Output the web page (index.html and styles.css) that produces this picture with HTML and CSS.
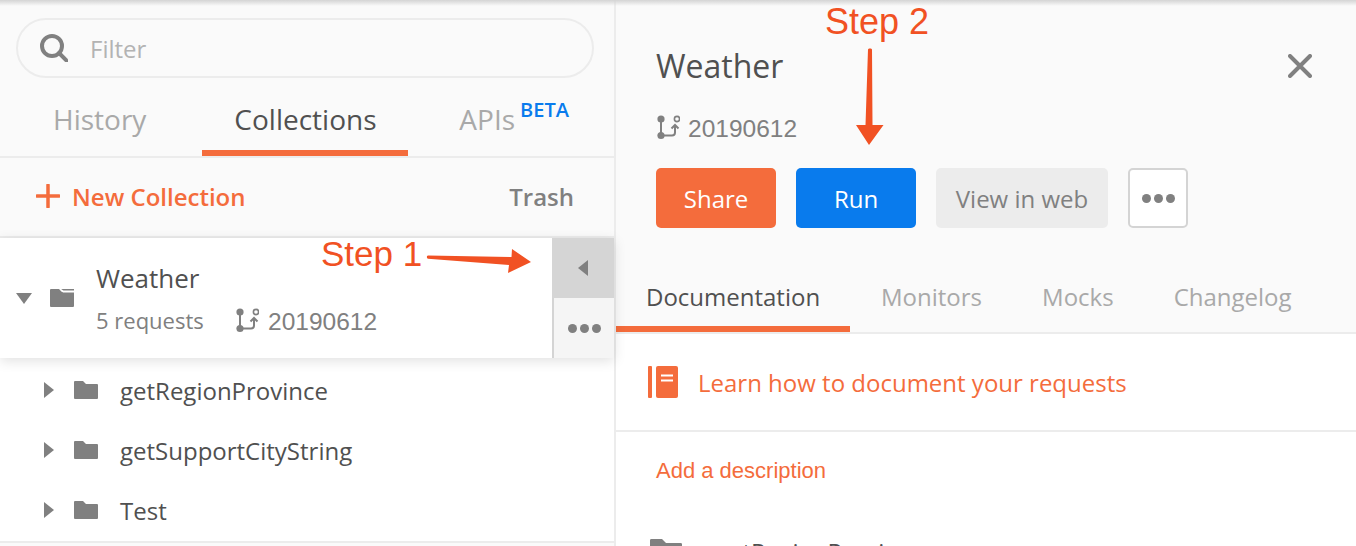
FILE: index.html
```html
<!DOCTYPE html>
<html lang="en">
<head>
  <meta charset="UTF-8">
  <title>Weather collection</title>
  <link rel="stylesheet" href="styles.css">
</head>
<body>
  <svg class="defs" width="0" height="0">
    <symbol id="folder" viewBox="0 0 24 18"><path d="M1 0h8l3 3h11a1 1 0 0 1 1 1v13a1 1 0 0 1-1 1H1a1 1 0 0 1-1-1V1a1 1 0 0 1 1-1z"/></symbol>
    <symbol id="branch" viewBox="0 0 24 25">
      <circle cx="5" cy="4" r="3.6" fill="#808080"/>
      <circle cx="5" cy="20.5" r="3.6" fill="#808080"/>
      <circle cx="21" cy="4" r="2.6" fill="none" stroke="#808080" stroke-width="1.6"/>
      <path d="M5 5v15M5 20.5h11a3 3 0 0 0 3-3V10.500M15.500 13.500l3.500-3.500 3.500 3.500" fill="none" stroke="#808080" stroke-width="2"/>
    </symbol>
  </svg>

  <div class="app">
    <aside class="side">
      <div class="search">
        <div class="search-box">
          <svg class="search-icon" width="28" height="28" viewBox="0 0 28 28"><circle cx="12" cy="12" r="10" fill="none" stroke="#808080" stroke-width="4"/><path d="M19 19l8 8" stroke="#808080" stroke-width="4" stroke-linecap="round"/></svg>
          <span class="filter">Filter</span>
        </div>
      </div>
      <nav class="side-tabs">
        <a class="side-tab tab-history">History</a>
        <a class="side-tab tab-collections">Collections</a>
        <a class="side-tab tab-apis">APIs<sup>BETA</sup></a>
      </nav>
      <div class="toolbar">
        <a class="new-collection">
          <svg width="24" height="24" viewBox="0 0 24 24"><path d="M12 1v22M1 12h22" stroke="#f46c3c" stroke-width="3.500" stroke-linecap="round"/></svg>
          New Collection
        </a>
        <a class="trash">Trash</a>
      </div>
      <div class="collection">
        <span class="caret-down"></span>
        <svg class="open-folder" width="24" height="18" viewBox="0 0 24 18"><path d="M1 0h8l3 3h12v14a1 1 0 0 1-1 1H1a1 1 0 0 1-1-1V1a1 1 0 0 1 1-1z" fill="#808080"/><path d="M11 0h13v1.500H12.500z" fill="#808080"/><path d="M10 0.500l3 3h11V2H13.500L12 .5z" fill="#fff"/></svg>
        <div class="collection-info">
          <div class="collection-name">Weather</div>
          <div class="collection-meta">
            <span class="requests">5 requests</span>
            <svg class="branch" width="24" height="25"><use href="#branch"/></svg>
            <span class="version">20190612</span>
          </div>
        </div>
        <div class="collection-actions">
          <div class="action-collapse"><span class="caret-left"></span></div>
          <div class="action-more"><span class="dots"><i></i><i></i><i></i></span></div>
        </div>
      </div>
      <ul class="folders">
        <li><span class="caret-right"></span><svg class="folder" width="24" height="18"><use href="#folder"/></svg>getRegionProvince</li>
        <li><span class="caret-right"></span><svg class="folder" width="24" height="18"><use href="#folder"/></svg>getSupportCityString</li>
        <li><span class="caret-right"></span><svg class="folder" width="24" height="18"><use href="#folder"/></svg>Test</li>
      </ul>
    </aside>

    <main class="detail">
      <div class="detail-head">
        <div class="detail-title">
          <h1>Weather</h1>
          <svg width="24" height="24" viewBox="0 0 24 24"><path d="M2 2l20 20M22 2L2 22" stroke="#808080" stroke-width="4" stroke-linecap="round"/></svg>
        </div>
        <div class="detail-version">
          <svg class="branch" width="24" height="25"><use href="#branch"/></svg>
          <span class="version">20190612</span>
        </div>
        <div class="buttons">
          <a class="btn btn-share">Share</a>
          <a class="btn btn-run">Run</a>
          <a class="btn btn-web">View in web</a>
          <a class="btn btn-more"><span class="dots"><i></i><i></i><i></i></span></a>
        </div>
        <nav class="detail-tabs">
          <a class="detail-tab active">Documentation</a>
          <a class="detail-tab">Monitors</a>
          <a class="detail-tab">Mocks</a>
          <a class="detail-tab">Changelog</a>
        </nav>
      </div>
      <div class="learn">
        <svg width="30" height="32" viewBox="0 0 30 32"><rect width="4" height="32" rx="1" fill="#f46c3c"/><rect x="8" width="22" height="32" rx="2" fill="#f46c3c"/><path d="M13 9.500h12M13 14.500h12" stroke="#fff" stroke-width="2"/></svg>
        <a>Learn how to document your requests</a>
      </div>
      <div class="describe"><a>Add a description</a></div>
      <div class="doc-folder">
        <svg width="32" height="24"><use href="#folder"/></svg>
        <span>getRegionProvince</span>
      </div>
    </main>
  </div>

  <div class="top-shade"></div>

  <div class="step step-1">Step 1</div>
  <svg class="arrow arrow-1" width="106" height="26" viewBox="0 0 106 26"><path d="M2 6.500c-1.500 0-1.500 3 0 3.300L83 16l-1 8 23-11L86 0l-.5 8z" fill="#f15123"/></svg>
  <div class="step step-2">Step 2</div>
  <svg class="arrow arrow-2" width="28" height="100" viewBox="0 0 28 100"><path d="M12 1.500c0-1.500 4-1.500 4 0L16.500 77h11L13 97 0 77h9.500z" fill="#f15123"/></svg>
</body>
</html>
```

FILE: styles.css
```css
* { box-sizing: border-box; }
body { margin: 0; width: 1356px; height: 546px; overflow: hidden; position: relative; font-family: "Open Sans", sans-serif; color: #505050; background: #fff; }
h1, ul { margin: 0; padding: 0; }
li { list-style: none; }
.defs { position: absolute; }
.folder, .doc-folder svg { fill: #808080; }

.app { display: flex; height: 546px; }
.top-shade { position: absolute; left: 0; top: 0; width: 100%; height: 6px; background: linear-gradient(#d4d4d4, rgba(250, 250, 250, 0)); }

/* left pane */
.side { width: 616px; flex: none; background: #fafafa; border-right: 2px solid #ececec; }
.search { height: 78px; padding: 18px 20px 0 16px; }
.search-box { height: 60px; border: 2px solid #ececec; border-radius: 30px; display: flex; align-items: center; padding-left: 22px; font-size: 24px; color: #b3b3b3; }
.search-icon { margin-right: 22px; }
.filter { margin-top: 1px; }

.side-tabs { height: 80px; border-bottom: 2px solid #ececec; position: relative; display: flex; font-size: 28px; }
.side-tab { padding-top: 20px; line-height: 42px; color: #a9a9a9; }
.tab-history { margin-left: 53px; }
.tab-collections { margin-left: 56px; padding-left: 32px; width: 206px; color: #505050; border-bottom: 6px solid #f46c3c; }
.tab-apis { margin-left: 51px; }
.tab-apis sup { color: #097bed; font-size: 20px; font-weight: 600; line-height: 0; margin-left: 5px; vertical-align: 13px; }

.toolbar { height: 80px; border-bottom: 2px solid #ececec; display: flex; align-items: center; justify-content: space-between; padding: 0 40px 2px 36px; font-size: 24px; font-weight: 600; }
.new-collection { display: flex; align-items: center; gap: 12px; color: #f46c3c; }
.trash { color: #808080; }

.collection { height: 120px; background: #fff; display: flex; align-items: center; box-shadow: 0 3px 12px rgba(0, 0, 0, .12); position: relative; }
.caret-down { width: 0; height: 0; margin-left: 16px; border-left: 8px solid transparent; border-right: 8px solid transparent; border-top: 11px solid #808080; }
.open-folder { margin-left: 18px; }
.collection-info { margin: 2px 0 0 22px; flex: 1; }
.collection-name { font-size: 26px; line-height: 34px; margin-top: -1px; }
.collection-meta { display: flex; align-items: center; margin-top: 9px; }
.requests { font-size: 22px; color: #808080; width: 139px; }
.branch { margin-right: 9px; }
.version { font-family: "Liberation Sans", sans-serif; font-size: 24.5px; color: #808080; margin-top: 4px; }
.collection-actions { width: 62px; height: 120px; border-left: 2px solid #d4d4d4; }
.action-collapse { height: 60px; margin-left: -2px; background: #d5d5d5; display: flex; align-items: center; justify-content: center; }
.action-more { height: 60px; background: #f5f5f5; display: flex; align-items: center; justify-content: center; }
.caret-left { width: 0; height: 0; border-top: 8px solid transparent; border-bottom: 8px solid transparent; border-right: 10px solid #808080; }
.caret-right { width: 0; height: 0; margin-right: 20px; border-top: 8px solid transparent; border-bottom: 8px solid transparent; border-left: 10px solid #808080; }
.dots { display: flex; gap: 3px; }
.dots i { width: 9px; height: 9px; border-radius: 50%; background: #808080; }

.folders { padding-top: 3px; height: 185px; border-bottom: 2px solid #ececec; background: #fff; }
.folders li { height: 60px; display: flex; align-items: center; padding: 0 0 2px 44px; font-size: 24px; }
.folder { margin-right: 22px; }

/* right pane */
.detail { flex: 1; background: #fff; }
.detail-head { background: #fafafa; height: 334px; border-bottom: 2px solid #ececec; padding-top: 40px; }
.detail-title { display: flex; justify-content: space-between; align-items: center; height: 50px; padding: 0 44px 0 40px; }
.detail-title h1 { font-size: 32px; font-weight: 400; }
.detail-title svg { margin-top: 2px; }
.detail-version { display: flex; align-items: center; height: 30px; margin: 22px 0 0 40px; }
.detail-version .branch { margin-right: 8px; }
.buttons { display: flex; gap: 20px; margin: 26px 0 0 40px; }
.btn { height: 60px; width: 120px; border-radius: 5px; display: flex; align-items: center; justify-content: center; font-size: 24px; }
.btn-share { background: #f46c3c; color: #fff; }
.btn-run { background: #097bed; color: #fff; }
.btn-web { background: #ececec; color: #808080; width: 172px; }
.btn-more { width: 60px; border: 2px solid #d4d4d4; background: #fff; }
.detail-tabs { display: flex; margin-top: 38px; height: 66px; font-size: 24px; }
.detail-tab { padding: 0 30px; line-height: 62px; height: 66px; color: #a9a9a9; }
.detail-tab.active { color: #505050; border-bottom: 6px solid #f46c3c; width: 234px; margin-right: 1px; }

.learn { height: 98px; border-bottom: 2px solid #ececec; display: flex; align-items: center; padding-left: 32px; gap: 20px; color: #f46c3c; font-size: 24px; }
.describe { padding: 23px 0 0 40px; font-family: "Liberation Sans", sans-serif; font-size: 22px; line-height: 32px; color: #f46c3c; }
.doc-folder { display: flex; align-items: flex-start; margin: 52px 0 0 34px; font-size: 24px; }
.doc-folder span { margin: -4px 0 0 34px; }

/* annotations laid over the screenshot */
.step { position: absolute; font-family: "Liberation Sans", sans-serif; font-size: 35px; line-height: 40px; color: #f15123; }
.step-1 { left: 321px; top: 234px; }
.step-2 { left: 825px; top: 2px; font-size: 36px; }
.arrow { position: absolute; }
.arrow-1 { left: 426px; top: 249px; }
.arrow-2 { left: 856px; top: 48px; }
```
